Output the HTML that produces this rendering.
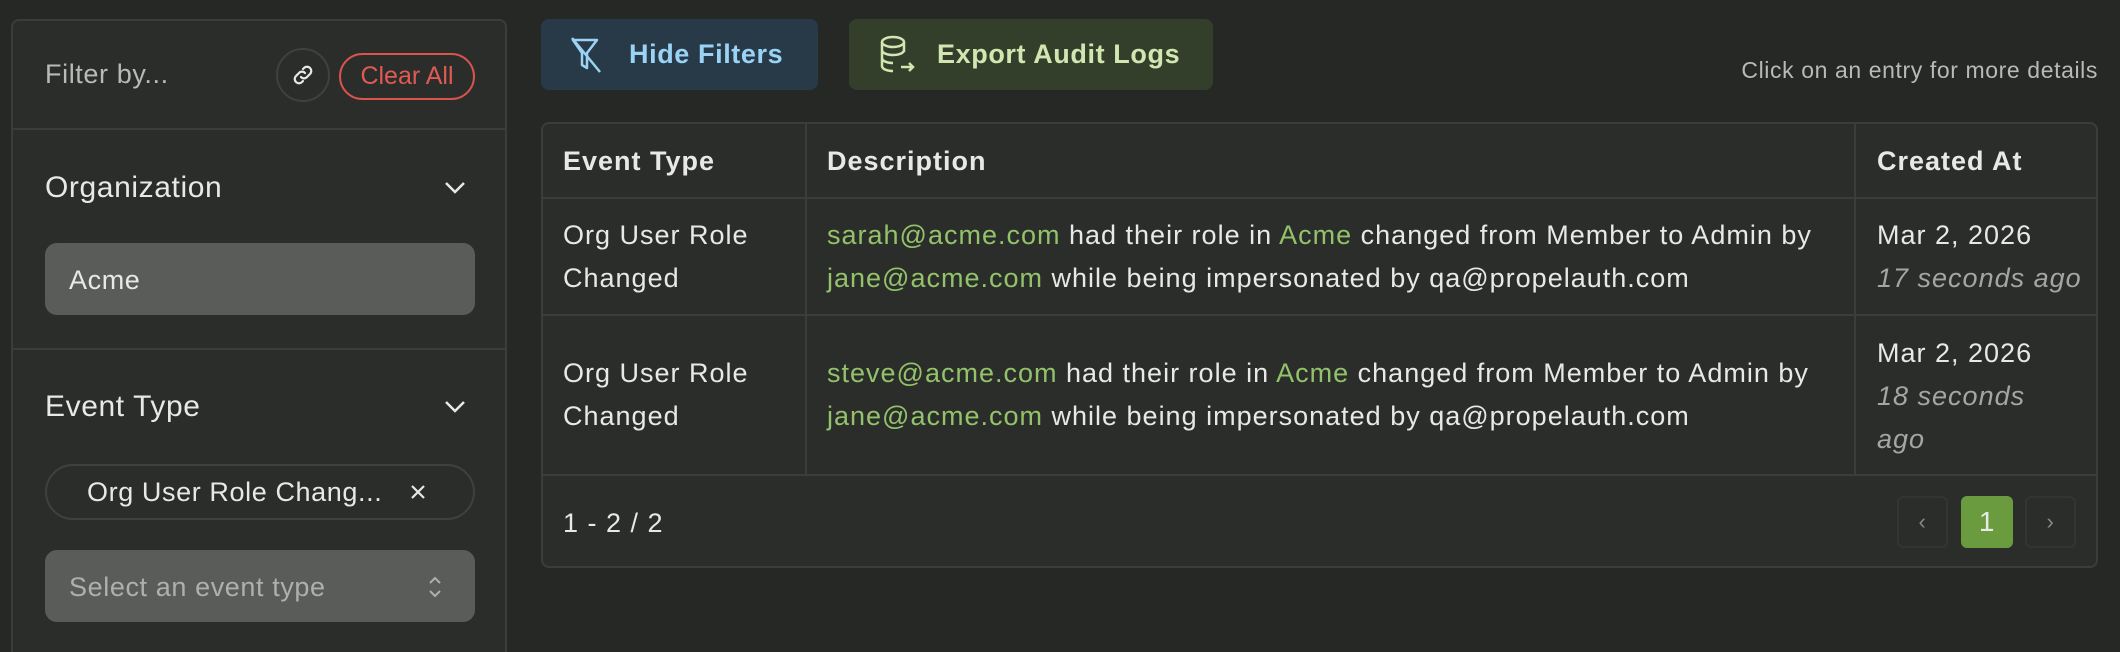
<!DOCTYPE html>
<html style="overflow:hidden;height:652px"><head><style>
*{box-sizing:border-box;margin:0;padding:0}
body{width:2120px;height:652px;overflow:hidden;background:#262825;font-family:"Liberation Sans",sans-serif;color:#e8e8e6;position:relative;letter-spacing:0.6px}
.abs{position:absolute}
.side{left:11px;top:19px;width:496px;height:640px;background:#2b2d2a;border:2px solid #3b3d3a;border-bottom:none;border-radius:8px 8px 0 0}
.hr{position:absolute;left:0;right:0;height:2px;background:#3b3d3a}
.lbl{font-size:30px;color:#e8e8e6}
.btn{border-radius:8px;font-size:27px;font-weight:bold;display:flex;align-items:center}
.tbl{left:541px;top:122px;width:1557px;height:446px;border:2px solid #3b3d3a;border-radius:8px;background:#2b2d2a;overflow:hidden}
.g{color:#93c26b}
.cell{position:absolute;font-size:27px;line-height:43px;letter-spacing:1px}
</style></head><body>
<div class="abs side">
  <div class="abs" style="left:32px;top:38px;font-size:27px;color:#b9bab7">Filter by...</div>
  <div class="abs" style="left:263px;top:27px;width:54px;height:54px;border:2px solid #3f413e;border-radius:50%"></div>
  <svg class="abs" style="left:278px;top:42px" width="24" height="24" viewBox="0 0 24 24" fill="none" stroke="#e8e8e6" stroke-width="2.2" stroke-linecap="round"><path d="M10 14a4 4 0 0 0 6 0l3-3a4 4 0 0 0-6-6l-1 1"/><path d="M14 10a4 4 0 0 0-6 0l-3 3a4 4 0 0 0 6 6l1-1"/></svg>
  <div class="abs" style="left:326px;top:32px;width:136px;height:47px;border:2px solid #d9534f;border-radius:24px;color:#e05a55;font-size:25px;display:flex;align-items:center;justify-content:center;letter-spacing:0">Clear All</div>
  <div class="hr" style="top:107px"></div>
  <div class="abs lbl" style="left:32px;top:150px">Organization</div>
  <svg class="abs" style="left:430px;top:156px" width="24" height="20" viewBox="0 0 24 20" fill="none" stroke="#e8e8e6" stroke-width="2.5"><path d="M3 6l9 9 9-9"/></svg>
  <div class="abs" style="left:32px;top:222px;width:430px;height:72px;background:#5a5c59;border-radius:12px;font-size:27px;padding:22px 24px">Acme</div>
  <div class="hr" style="top:327px"></div>
  <div class="abs lbl" style="left:32px;top:369px">Event Type</div>
  <svg class="abs" style="left:430px;top:375px" width="24" height="20" viewBox="0 0 24 20" fill="none" stroke="#e8e8e6" stroke-width="2.5"><path d="M3 6l9 9 9-9"/></svg>
  <div class="abs" style="left:32px;top:443px;width:430px;height:56px;border:2px solid #3f413e;border-radius:28px;font-size:27px;padding:11px 0 0 40px">Org User Role Chang...</div>
  <svg class="abs" style="left:396px;top:462px" width="18" height="18" viewBox="0 0 18 18" stroke="#e8e8e6" stroke-width="2.2"><path d="M3 3l12 12M15 3L3 15"/></svg>
  <div class="abs" style="left:32px;top:529px;width:430px;height:72px;background:#5a5c59;border-radius:12px;font-size:27px;padding:22px 24px;color:#aeb0ad">Select an event type</div>
  <svg class="abs" style="left:414px;top:553px" width="16" height="26" viewBox="0 0 16 26" fill="none" stroke="#aeb0ad" stroke-width="2"><path d="M3 9l5-5 5 5M3 17l5 5 5-5"/></svg>
</div>

<div class="abs btn" style="left:541px;top:19px;width:277px;height:71px;background:#283a47;color:#9ad3f5">
  <svg style="margin-left:28px" width="34" height="38" viewBox="0 0 34 38" fill="none" stroke="#9ad3f5" stroke-width="2.5" stroke-linejoin="round"><path d="M4 4h24l-10 13v15l-5-3V17z"/><path d="M3 2l28 34"/></svg>
  <span style="margin-left:26px">Hide Filters</span></div>
<div class="abs btn" style="left:849px;top:19px;width:364px;height:71px;background:#333f2b;color:#d1e6b0">
  <svg style="margin-left:30px" width="36" height="40" viewBox="0 0 36 40" fill="none" stroke="#d1e6b0" stroke-width="2.5"><ellipse cx="14" cy="7" rx="11" ry="5"/><path d="M3 7v24c0 3 5 5 11 5M25 7v10M3 15c0 3 5 5 11 5s11-2 11-5M3 23c0 3 5 5 11 5"/><path d="M22 32h12M30 28l4 4-4 4"/></svg>
  <span style="margin-left:22px">Export Audit Logs</span></div>
<div class="abs" style="right:22px;top:57px;font-size:23px;color:#b9bab7">Click on an entry for more details</div>

<div class="abs tbl">
  <div class="hr" style="top:73px"></div>
  <div class="hr" style="top:190px"></div>
  <div class="hr" style="top:350px"></div>
  <div class="abs" style="left:262px;top:0;width:2px;height:350px;background:#3b3d3a"></div>
  <div class="abs" style="left:1311px;top:0;width:2px;height:350px;background:#3b3d3a"></div>
  <div class="cell" style="left:20px;top:16px;font-weight:bold">Event Type</div>
  <div class="cell" style="left:284px;top:16px;font-weight:bold">Description</div>
  <div class="cell" style="left:1334px;top:16px;font-weight:bold">Created At</div>
  <div class="cell" style="left:20px;top:90px">Org User Role<br>Changed</div>
  <div class="cell" style="left:284px;top:90px;white-space:nowrap"><span class="g">sarah@acme.com</span> had their role in <span class="g">Acme</span> changed from Member to Admin by<br><span class="g">jane@acme.com</span> while being impersonated by qa@propelauth.com</div>
  <div class="cell" style="left:1334px;top:90px">Mar 2, 2026<br><i style="color:#a5a6a3">17 seconds ago</i></div>
  <div class="cell" style="left:20px;top:228px">Org User Role<br>Changed</div>
  <div class="cell" style="left:284px;top:228px;white-space:nowrap"><span class="g">steve@acme.com</span> had their role in <span class="g">Acme</span> changed from Member to Admin by<br><span class="g">jane@acme.com</span> while being impersonated by qa@propelauth.com</div>
  <div class="cell" style="left:1334px;top:208px">Mar 2, 2026<br><i style="color:#a5a6a3">18 seconds<br>ago</i></div>
  <div class="cell" style="left:20px;top:378px">1 - 2 / 2</div>
  <div class="abs" style="left:1354px;top:372px;width:51px;height:52px;border:2px solid #333532;border-radius:6px;color:#888;font-size:22px;text-align:center;line-height:48px">‹</div>
  <div class="abs" style="left:1418px;top:372px;width:52px;height:52px;background:#6a9b3f;border-radius:6px;font-size:28px;text-align:center;line-height:52px">1</div>
  <div class="abs" style="left:1482px;top:372px;width:51px;height:52px;border:2px solid #333532;border-radius:6px;color:#888;font-size:22px;text-align:center;line-height:48px">›</div>
</div>
</body></html>
